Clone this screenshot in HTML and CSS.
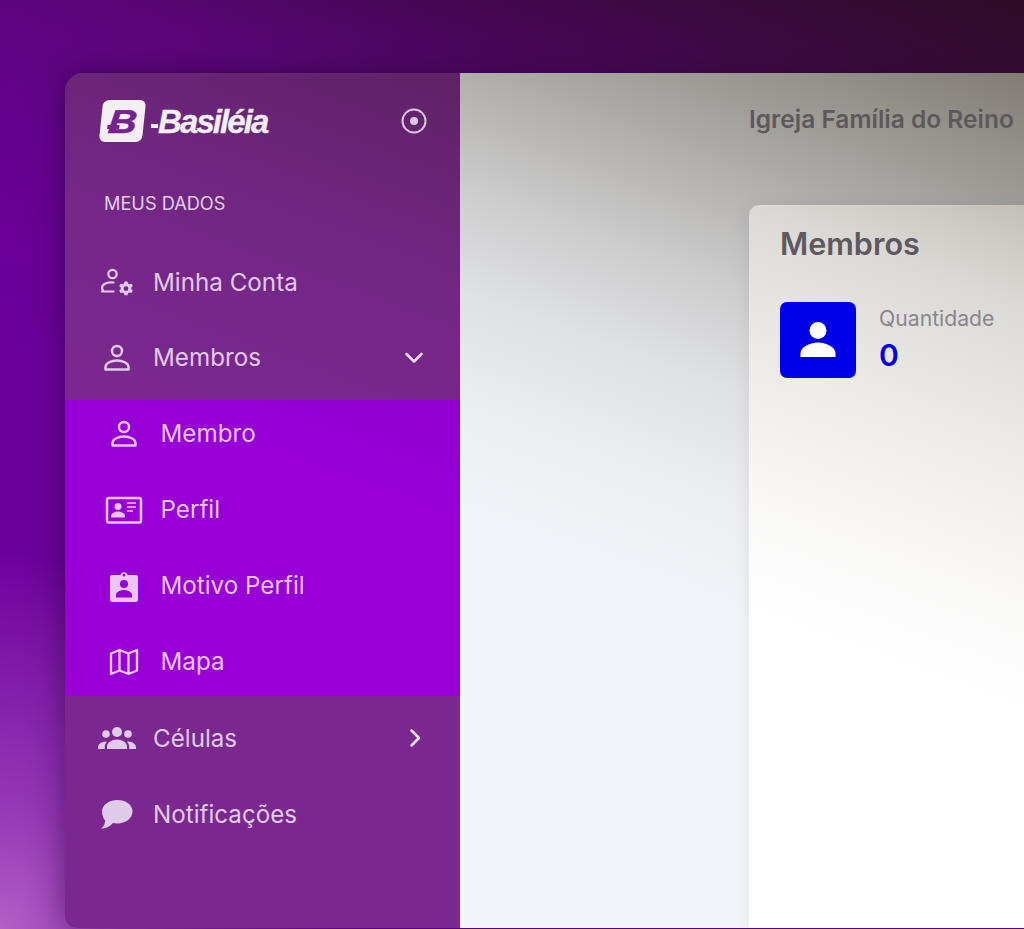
FILE: index.html
```html
<!DOCTYPE html>
<html lang="pt-BR">
<head>
<meta charset="utf-8">
<title>Basiléia</title>
<link rel="stylesheet" href="styles.css">
</head>
<body>
<div class="window">
  <aside class="sidebar">
    <div class="brand">
      <div class="logo">
        <span class="logo-mark"><span class="logo-b">B</span></span>
        <span class="logo-dash"></span>
        <span class="logo-text">Basiléia</span>
      </div>
      <svg class="target" viewBox="0 0 28 28"><circle cx="14" cy="14" r="11.5" fill="none" stroke="currentColor" stroke-width="2"/><circle cx="14" cy="14" r="4" fill="currentColor"/></svg>
    </div>
    <div class="section">MEUS DADOS</div>
    <nav class="menu">
      <a class="item">
        <span class="ico"><svg width="34" height="28" viewBox="1.5 0 34 28"><circle cx="14" cy="6" r="4.2" fill="none" stroke="currentColor" stroke-width="2.2"/><path d="M15 14.5c-6-.6-11.500 1.500-11.500 5.500 0 1 .5 1.800 1 2.300M3.500 23.500H15" fill="none" stroke="currentColor" stroke-width="2.200" stroke-linecap="round"/><path fill-rule="evenodd" fill="currentColor" d="M26 13.500h3l.5 2 1.500.8 2-.6 1.300 2.400-1.500 1.400v1.700l1.500 1.400-1.300 2.400-2-.6-1.500.8-.5 2h-3l-.5-2-1.500-.8-2 .6-1.300-2.400 1.500-1.400v-1.700l-1.500-1.400 1.300-2.400 2 .6 1.500-.8zM27.500 18.300a2.400 2.400 0 1 0 0 4.800a2.400 2.400 0 1 0 0-4.800z"/></svg></span>
        <span>Minha Conta</span>
      </a>
      <a class="item item-open">
        <span class="ico"><svg width="28" height="28" viewBox="0 0 28 28"><circle cx="14" cy="7" r="5" fill="none" stroke="currentColor" stroke-width="2.500"/><path d="M2.500 25.500v-2.500c0-4 6-6.500 11.500-6.500s11.500 2.500 11.500 6.500v2.500z" fill="none" stroke="currentColor" stroke-width="2.500" stroke-linejoin="round"/></svg></span>
        <span class="open-label">Membros</span>
        <svg class="chev" width="20" height="20" viewBox="0 0 20 20"><path d="M2.500 6l7.500 7.500L17.500 6" fill="none" stroke="currentColor" stroke-width="2.600" stroke-linecap="round" stroke-linejoin="round"/></svg>
      </a>
      <div class="submenu">
        <a class="subitem">
          <span class="ico"><svg width="28" height="28" viewBox="0 0 28 28"><circle cx="14" cy="7" r="5" fill="none" stroke="currentColor" stroke-width="2.500"/><path d="M2.500 25.500v-2.500c0-4 6-6.500 11.500-6.500s11.500 2.500 11.500 6.500v2.500z" fill="none" stroke="currentColor" stroke-width="2.500" stroke-linejoin="round"/></svg></span>
          <span class="sub-label">Membro</span>
        </a>
        <a class="subitem">
          <span class="ico"><svg width="38" height="30" viewBox="0 0 38 30"><rect x="2" y="3" width="34" height="24.500" rx="2" fill="none" stroke="currentColor" stroke-width="2.500"/><circle cx="13" cy="11.500" r="3.500" fill="currentColor"/><path d="M6 22.500v-1.500c0-3 4-4.500 7-4.500s7 1.500 7 4.500v1.500z" fill="currentColor"/><path d="M22 8h9M22 12h9M22 16h6" stroke="currentColor" stroke-width="1.600" fill="none"/></svg></span>
          <span class="sub-label">Perfil</span>
        </a>
        <a class="subitem">
          <span class="ico"><svg width="30" height="32" viewBox="0 0 30 32"><path fill="currentColor" fill-rule="evenodd" d="M3 5h8.500a3.600 3.600 0 0 1 7 0H27a2 2 0 0 1 2 2v23a2 2 0 0 1-2 2H3a2 2 0 0 1-2-2V7a2 2 0 0 1 2-2zM15 3.800a1.400 1.400 0 1 0 0 2.800a1.400 1.400 0 1 0 0-2.800zM15 10a4 4 0 1 0 0 8a4 4 0 1 0 0-8zM7 27.500h16v-2.500c0-3.300-5-5-8-5s-8 1.700-8 5z"/></svg></span>
          <span class="sub-label">Motivo Perfil</span>
        </a>
        <a class="subitem">
          <span class="ico"><svg width="30" height="30" viewBox="0 0 30 30"><path d="M2 6.500l8.500-3.500 9 3.500 8.500-3.500v20.500l-8.500 3.500-9-3.500-8.500 3.500zM10.500 3v20.500M19.500 6.500v20.500" fill="none" stroke="currentColor" stroke-width="2.400" stroke-linejoin="round"/></svg></span>
          <span class="sub-label">Mapa</span>
        </a>
      </div>
      <a class="item">
        <span class="ico"><svg width="38" height="24" viewBox="0 0 38 24"><circle cx="19" cy="6" r="5" fill="currentColor"/><circle cx="8" cy="8" r="3.800" fill="currentColor"/><circle cx="30" cy="8" r="3.800" fill="currentColor"/><path d="M9 23v-2.500c0-4 5-7 10-7s10 3 10 7v2.500z" fill="currentColor"/><path d="M0 23v-1.500c0-3 3-6 8-6l1 .2c-1.500 1.500-2.200 3-2.200 5V23zM38 23v-1.500c0-3-3-6-8-6l-1 .2c1.500 1.500 2.200 3 2.200 5V23z" fill="currentColor"/></svg></span>
        <span>Células</span>
        <svg class="chev" width="20" height="20" viewBox="0 0 20 20"><path d="M7.500 2.500l7.500 7.500-7.500 7.500" fill="none" stroke="currentColor" stroke-width="2.600" stroke-linecap="round" stroke-linejoin="round"/></svg>
      </a>
      <a class="item">
        <span class="ico"><svg width="32" height="29" viewBox="0 0 32 29"><path fill="currentColor" d="M16.500 0C24.500 0 31.500 4.500 31.500 11.500S24.500 23.500 16.500 23.500c-1.500 0-3-.2-4.500-.5-2.500 3-6 5-11 5.800-.6-.1-.6-.5-.2-.9 2-1.800 3.200-4 3.400-7.400C2 18.500 1 15 1 11.500 1 4.500 8.500 0 16.500 0z"/></svg></span>
        <span>Notificações</span>
      </a>
    </nav>
  </aside>
  <main class="content">
    <h1 class="church">Igreja Família do Reino</h1>
    <section class="card">
      <h2 class="card-title">Membros</h2>
      <div class="stat">
        <div class="stat-icon"><svg width="40" height="40" viewBox="0 0 40 40"><circle cx="20" cy="10.500" r="8.500" fill="#fff"/><path d="M2.500 37v-3.500c0-7 10-11 17.500-11s17.500 4 17.500 11V37z" fill="#fff"/></svg></div>
        <div class="stat-text">
          <div class="stat-label">Quantidade</div>
          <div class="stat-value">0</div>
        </div>
      </div>
    </section>
  </main>
</div>
<div class="shade"></div>
</body>
</html>
```
FILE: styles.css
```css
* { box-sizing: border-box; }
html, body { height: 100%; }
body {
  margin: 0;
  overflow: hidden;
  position: relative;
  font-family: Inter, "Liberation Sans", sans-serif;
  background:
    linear-gradient(200deg, rgba(10,0,10,.4) 0, rgba(10,0,10,0) 26%),
    radial-gradient(circle at 0 100%, #b25fc6 0, rgba(178,95,198,.6) 120px, rgba(178,95,198,0) 380px),
    #6c009c;
}
.window {
  margin: 73px 0 0 65px;
  height: 855px;
  display: flex;
  border-radius: 18px 0 0 12px;
  overflow: hidden;
  box-shadow: 0 0 34px rgba(30,0,50,.5);
}
.sidebar {
  flex: 0 0 395px;
  background: #7a288f;
  color: #e1cbea;
}
.brand {
  height: 96px;
  display: flex;
  align-items: center;
  justify-content: space-between;
  padding: 0 32px 0 36px;
}
.logo, .target, .section, .item > *, .subitem > *, .church, .card { position: relative; z-index: 2; }
.logo { display: flex; align-items: center; color: #f3eff5; }
.logo-mark {
  width: 43px;
  height: 42px;
  background: #f3eff5;
  border-radius: 6px;
  transform: skewX(-6deg);
  display: flex;
  align-items: center;
  justify-content: center;
  position: relative;
}
.logo-mark::before {
  content: "";
  position: absolute;
  left: 7px;
  top: 25px;
  width: 12px;
  height: 4px;
  background: #74228f;
}
.logo-b {
  color: #74228f;
  font: italic 700 33px/1 "Liberation Sans", sans-serif;
  -webkit-text-stroke: .5px #74228f;
  transform: scaleX(1.2);
}
.logo-dash {
  width: 7px;
  height: 4px;
  margin: 10px 0 0 7px;
  background: #f3eff5;
}
.logo-text {
  font: italic 700 33px/1 "Liberation Sans", sans-serif;
  letter-spacing: -1.9px;
  -webkit-text-stroke: .3px #f3eff5;
}
.target { width: 28px; height: 28px; color: #dcc8e2; }
.section {
  height: 68px;
  margin-bottom: 7px;
  padding-left: 39px;
  display: flex;
  align-items: center;
  font-size: 18.200px;
  font-weight: 400;
  color: #e2d0e9;
}
.item, .subitem {
  display: flex;
  align-items: center;
  font-size: 24.200px;
  font-weight: 400;
}
.item { height: 76px; padding: 0 36px 0 32px; }
.item-open { margin-bottom: 4px; }
.open-label { margin-top: -1px; }
.ico {
  flex: 0 0 40px;
  display: flex;
  align-items: center;
  justify-content: center;
  margin-right: 16px;
}
.chev { margin-left: auto; color: #efe2f3; }
.submenu {
  background: #9600d6;
  color: #ecc4fa;
  display: flex;
  flex-direction: column;
  gap: 8px;
}
.subitem { height: 68px; padding-left: 39px; }
.sub-label { margin: -1px 0 0 .5px; }
.submenu + .item { margin-top: 4px; }
.content {
  flex: 1;
  min-width: 0;
  display: flex;
  flex-direction: column;
  padding-left: 289px;
  background: #f3f5fa;
}
.church {
  margin: 0;
  height: 132px;
  padding-top: 28px;
  font-size: 24.5px;
  line-height: 36px;
  font-weight: 600;
  white-space: nowrap;
  color: #5e585c;
}
.card {
  flex: 1;
  background: linear-gradient(200deg, #c4c0b8 0%, #dbd9d5 12%, #e8e6e2 24%, #f8f7f6 45%, #fff 62%);
  border-radius: 10px 0 0 0;
  box-shadow: 0 0 16px rgba(60,60,90,.1);
  padding: 20px 0 0 31px;
}
.card-title {
  margin: 0;
  font-size: 30.600px;
  line-height: 38px;
  font-weight: 600;
  color: #5e585f;
}
.stat { display: flex; margin-top: 39px; }
.stat-icon {
  width: 76px;
  height: 76px;
  border-radius: 7px;
  background: #0000e6;
  display: flex;
  align-items: center;
  justify-content: center;
}
.stat-text { margin: 2px 0 0 23px; white-space: nowrap; }
.stat-label { font-size: 21.200px; line-height: 28px; color: #8a8590; }
.stat-value { margin-top: 5px; font-size: 30px; line-height: 36px; font-weight: 600; color: #0000e6; }
.shade {
  position: absolute;
  inset: 0;
  z-index: 1;
  pointer-events: none;
  background: linear-gradient(200deg, rgba(30,20,0,.62) 0%, rgba(30,20,0,.5) 8%, rgba(30,20,0,.33) 20%, rgba(30,20,0,.18) 30%, rgba(30,20,0,.09) 38%, rgba(30,20,0,.03) 47%, rgba(30,20,0,0) 56%);
}
```
